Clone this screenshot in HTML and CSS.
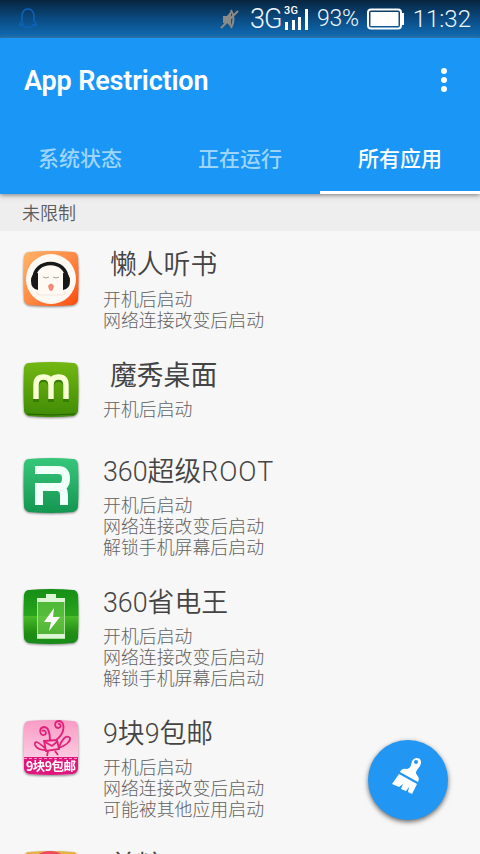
FILE: index.html
```html
<!DOCTYPE html>
<html lang="zh-CN">
<head>
<meta charset="utf-8">
<title>App Restriction</title>
<link rel="stylesheet" href="styles.css">
</head>
<body>
<div class="screen">
  <div class="statusbar">
    <svg class="penguin" width="20" height="22" viewBox="0 0 20 22"><path d="M4 13C1 16 1 19 3 17L5 16Q5 19 8 19H12Q15 19 15 17L17 17C19 19 19 16 16 13V9C16 4 14 1 10 1S4 4 4 9Z"/></svg>
    <svg class="mute" width="20" height="22" viewBox="0 0 20 22"><path d="M3 8h4l4-5v16l-4-4H3z" fill="#8b8a88"/><path d="M11 2q5 9 0 18M1 20L18 3" fill="none" stroke="#8b8a88" stroke-width="2"/></svg>
    <span class="net">3G</span>
    <svg class="signal" width="26" height="28" viewBox="0 0 26 28"><text x="-1" y="9" textLength="14">3G</text><path d="M0 17h3v8H0zM7 15h3v10H7zM13 12h3v13h-3zM20 4h3v21h-3z"/></svg>
    <span class="percent">93%</span>
    <svg class="battery" width="38" height="22" viewBox="0 0 38 22"><rect x="1" y="1.5" width="33" height="19" rx="3"/><rect class="fill" x="3.5" y="4" width="28" height="14"/><path class="fill" d="M34 5h3v12h-3z"/></svg>
    <span class="clock">11:32</span>
  </div>
  <header>
    <div class="toolbar"><h1>App Restriction</h1><div class="more"><i></i><i></i><i></i></div></div>
    <nav><span>系统状态</span><span>正在运行</span><span class="active">所有应用</span></nav>
  </header>
  <h2>未限制</h2>
  <main>
    <article class="app">
      <svg class="icon" viewBox="0 0 56 58"><defs><linearGradient id="orange" x1="0" y1="0" x2="1" y2="1"><stop stop-color="#ffb36a"/><stop offset=".5" stop-color="#ff8a45"/><stop offset="1" stop-color="#fb4a0b"/></linearGradient></defs><path fill="url(#orange)" d="M6 2Q28 0 50 2Q54 2 55 7Q56 28 55 50Q54 54 50 55Q28 57 6 55Q2 54 1 50Q0 28 1 7Q2 2 6 2Z"/><circle cx="28" cy="29" r="25" fill="#fff9f3"/><path d="M11 30C10 8 45 8 44 30" fill="none" stroke="#181818" stroke-width="3.5"/><path d="M15 24v16Q8 39 8 31T15 23M40 24v16Q47 39 47 31T40 23" fill="#181818"/><path d="M20 27q3 2 6 0M30 27q3 2 6 0" fill="none" stroke="#aaa093"/><path d="M25 36q3-5 6 0q-1 5-3 5t-3-5" fill="#ef8b78"/><path d="M14 41q-1 4 2 4h24q3 0 2-4" fill="none" stroke="#eee7df"/></svg>
      <div class="copy"><h3 class="inset">懒人听书</h3><p>开机后启动</p><p>网络连接改变后启动</p></div>
    </article>
    <article class="app second">
      <svg class="icon" viewBox="0 0 56 58"><defs><linearGradient id="lime" x1="0" y1="0" x2="0" y2="1"><stop stop-color="#73b712"/><stop offset="1" stop-color="#3f8c05"/></linearGradient></defs><path fill="url(#lime)" d="M6 2Q28 0 50 2Q54 2 55 7Q56 28 55 50Q54 54 50 55Q28 57 6 55Q2 54 1 50Q0 28 1 7Q2 2 6 2Z"/><path d="M13 41V26q0-8 7.500-8t7.500 8v15M28 26q0-8 7.500-8t7.500 8v15" fill="none" stroke="#377d05" stroke-width="6"/><path d="M13 38V24q0-8 7.500-8t7.500 8v14M28 24q0-8 7.500-8t7.500 8v14" fill="none" stroke="#f8ffd2" stroke-width="5.500"/><path d="M4 53q24 2 48 0" stroke="#285f08" fill="none"/></svg>
      <div class="copy"><h3 class="inset strong">魔秀桌面</h3><p>开机后启动</p></div>
    </article>
    <article class="app third">
      <svg class="icon" viewBox="0 0 56 58"><defs><linearGradient id="root" x1="0" y1="0" x2="0" y2="1"><stop stop-color="#36c77b"/><stop offset="1" stop-color="#149650"/></linearGradient></defs><path fill="url(#root)" d="M6 2Q28 0 50 2Q54 2 55 7Q56 28 55 50Q54 54 50 55Q28 57 6 55Q2 54 1 50Q0 28 1 7Q2 2 6 2Z"/><path d="M12 13H35Q43 13 43 21.500T35 30H16V48M28 30H35Q41 31 41 38V48" fill="none" stroke="#f0fff7" stroke-width="8"/></svg>
      <div class="copy"><h3>360超级<span class="latin">ROOT</span></h3><p>开机后启动</p><p>网络连接改变后启动</p><p>解锁手机屏幕后启动</p></div>
    </article>
    <article class="app fourth">
      <svg class="icon" viewBox="0 0 56 58"><defs><linearGradient id="energy" x1="0" y1="0" x2="0" y2="1"><stop stop-color="#158e16"/><stop offset=".49" stop-color="#28a51b"/><stop offset=".5" stop-color="#48ba27"/><stop offset=".8" stop-color="#218d13"/><stop offset="1" stop-color="#168c1b"/></linearGradient></defs><path fill="url(#energy)" d="M6 2Q28 0 50 2Q54 2 55 7Q56 28 55 50Q54 54 50 55Q28 57 6 55Q2 54 1 50Q0 28 1 7Q2 2 6 2Z"/><rect x="14.5" y="10.5" width="27" height="40" fill="#6bc94c" fill-opacity=".65" stroke="#a9df98"/><path d="M23 6h10v4H23zM14 10h28v4H14zM14 46h28v4H14z" fill="#dcf5d4"/><path d="M31 20L21 34h7l-2 9l11-14h-7z" fill="#fff"/></svg>
      <div class="copy"><h3>360省电王</h3><p>开机后启动</p><p>网络连接改变后启动</p><p>解锁手机屏幕后启动</p></div>
    </article>
    <article class="app fifth">
      <svg class="icon" viewBox="0 0 56 58"><defs><linearGradient id="pink" x1="0" y1="0" x2="0" y2="1"><stop stop-color="#f99bc5"/><stop offset="1" stop-color="#ffe0ed"/></linearGradient></defs><path fill="url(#pink)" d="M6 2Q28 0 50 2Q54 2 55 7Q56 28 55 50Q54 54 50 55Q28 57 6 55Q2 54 1 50Q0 28 1 7Q2 2 6 2Z"/><path fill="#df177c" d="M1 38H55L55 50Q54 54 50 55Q28 57 6 55Q2 54 1 50Z"/><path d="M1 39.500H55" stroke="#ff9bcb" stroke-dasharray="3 2"/><g fill="none" stroke="#df2179" stroke-width="1.800"><path d="M27 22C27 14 26 8 21 8c-6 1-4 9 0 8c4-1 1-6-2-4M33 21C43 14 42 2 36 2c-5 0-5 7-1 7c4 0 3-5 0-4M21 22l13-1 2 9-13 2zM22 23l7 4 6-5M22 29Q11 19 12 26q2 5 11 5M36 28q6-14 11-9q1 5-11 10M25 32l-1 5M32 32l3 4"/></g><text class="badge" x="3" y="52" textLength="50">9块9包邮</text></svg>
      <div class="copy"><h3>9块9包邮</h3><p>开机后启动</p><p>网络连接改变后启动</p><p>可能被其他应用启动</p></div>
    </article>
    <article class="app sixth">
      <svg class="icon" viewBox="0 0 56 58"><path fill="#e5b343" d="M6 2Q28 0 50 2Q54 2 55 7V55H1V7Q2 2 6 2Z"/><ellipse cx="27" cy="15" rx="18" ry="14" fill="#ed4b5d"/></svg>
      <div class="copy"><h3 class="inset strong">美糖</h3></div>
    </article>
  </main>
  <button class="fab" aria-label="清理"><svg width="40" height="44" viewBox="0 0 40 44"><path fill="#fff" fill-rule="evenodd" d="M32 2Q27-1 24 4L23 8Q22 12 18 12Q14 11 12 15L30 25Q32 21 29 18Q27 16 29 13L32 9Q34 5 32 2zM28 3a2 2 0 1 1 0 4a2 2 0 0 1 0-4zM11 17L29 27 24 37l-4-2 1-5-3 4-5-2 2-5-4 3-7-3z"/></svg></button>
</div>
</body>
</html>
```
FILE: styles.css
```css
* { box-sizing: border-box; }
body { margin: 0; }
.screen { position: relative; width: 480px; height: 854px; overflow: hidden; background: #f7f7f7; font-family: Roboto, "Noto Sans CJK SC", sans-serif; }
.statusbar { display: flex; align-items: center; height: 38px; background: linear-gradient(#07243f, #0b4a80 48%, #106eb7); color: #eef7ff; padding: 0 9px 0 18px; font: 300 24px/38px Roboto, sans-serif; }
.penguin { fill: none; stroke: #0c62b8; stroke-width: 1.6; }
.mute { margin-left: 182px; }
.net { margin-left: 10px; width: 35px; letter-spacing: -1px; font-size: 27px; }
.signal { fill: #fff; overflow: visible; font: 500 11px Roboto, sans-serif; }
.percent { width: 45px; margin-left: 6px; font-size: 23px; letter-spacing: -.2px; }
.battery { margin-left: 5px; fill: none; stroke: #fff; stroke-width: 2; }
.battery .fill { fill: #fff; stroke: none; }
.clock { margin-left: auto; font-size: 24px; }
header { height: 156px; background: #1996f6; box-shadow: 0 1px 5px #777; position: relative; color: #fff; }
.toolbar { height: 86px; display: flex; align-items: center; justify-content: space-between; padding: 0 33px 0 24px; }
h1 { margin: 0; font-size: 27px; font-weight: 600; letter-spacing: -.15px; }
.more { display: grid; gap: 3px; padding-bottom: 2px; }
.more i { display: block; width: 6px; height: 6px; border-radius: 50%; background: #fff; }
nav { display: grid; grid-template-columns: repeat(3, 1fr); height: 70px; }
nav span { display: flex; align-items: center; justify-content: center; padding-bottom: 4px; color: #9dd5fd; font-size: 21px; font-weight: 500; }
nav .active { color: #fff; border-bottom: 3px solid #fff; padding: 0 0 1px; }
h2 { margin: 0; padding-left: 22px; height: 37px; background: #eee; color: #5c5c5c; font-size: 18px; font-weight: 350; line-height: 40px; }
.app { display: flex; height: 111px; padding: 19px 23px 0; }
.app.second { height: 96px; }
.app.third, .app.fourth, .app.fifth { height: 131px; }
.icon { width: 56px; height: 58px; flex-shrink: 0; filter: drop-shadow(0 1px 1px #888); }
.copy { margin-left: 24px; }
h3 { margin: 0 0 9px; color: #444; font: 350 26.8px/30px Roboto, "Noto Sans CJK SC", sans-serif; white-space: nowrap; }
h3.inset { padding-left: 7px; }
h3.strong { font-weight: 400; }
.second h3, .third h3, .fourth h3, .fifth h3 { margin-bottom: 8px; }
.sixth h3 { padding-top: 1px; }
.latin { letter-spacing: 1px; }
p { margin: 0; color: #626262; font-size: 17.9px; font-weight: 300; line-height: 21px; white-space: nowrap; }
.badge { fill: #fff; font: 700 12.5px "Noto Sans CJK SC", sans-serif; }
.fab { position: absolute; left: 368px; top: 740px; width: 80px; height: 80px; padding: 0 0 2px; border: 0; border-radius: 50%; background: #2196f3; box-shadow: 0 2px 5px #666; display: flex; align-items: center; justify-content: center; }
```
